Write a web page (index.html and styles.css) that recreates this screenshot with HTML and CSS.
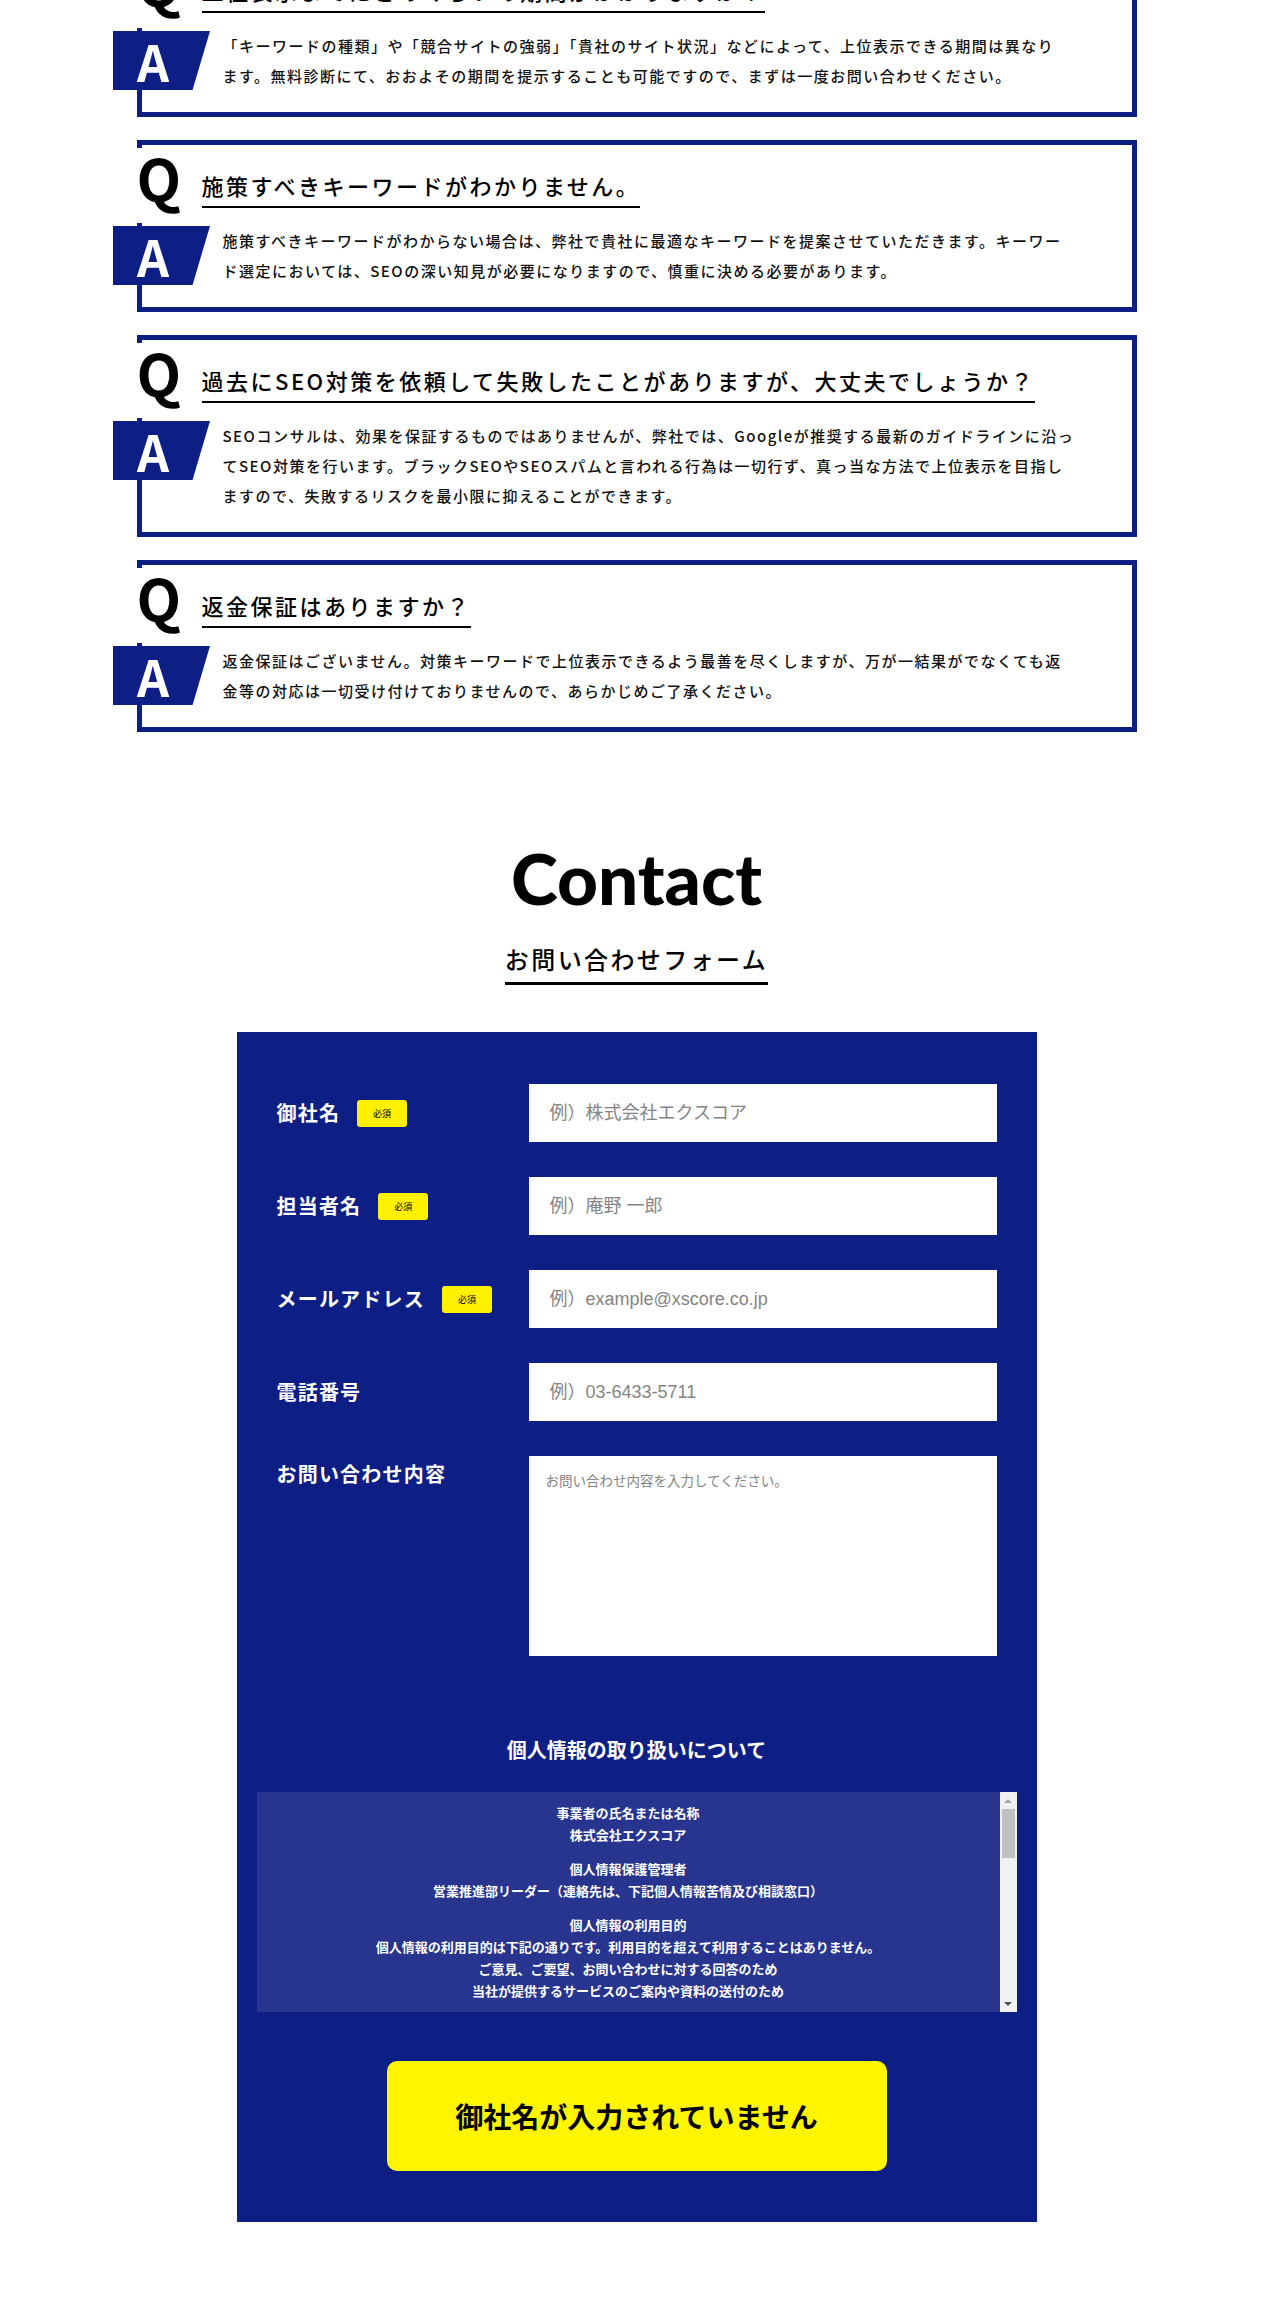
FILE: index.html
```html
<!DOCTYPE html>
<html lang="ja">
<head>
<meta charset="utf-8">
<title>FAQ / Contact</title>
<link rel="stylesheet" href="styles.css">
</head>
<body>
<section class="faq">
  <div class="faq-item">
    <span class="faq-q-mark">Q</span>
    <h3 class="faq-question">上位表示までにどのくらいの期間がかかりますか？</h3>
    <span class="faq-a-mark">A</span>
    <p class="faq-answer">「キーワードの種類」や「競合サイトの強弱」「貴社のサイト状況」などによって、上位表示できる期間は異なり<br>ます。無料診断にて、おおよその期間を提示することも可能ですので、まずは一度お問い合わせください。</p>
  </div>
  <div class="faq-item">
    <span class="faq-q-mark">Q</span>
    <h3 class="faq-question">施策すべきキーワードがわかりません。</h3>
    <span class="faq-a-mark">A</span>
    <p class="faq-answer">施策すべきキーワードがわからない場合は、弊社で貴社に最適なキーワードを提案させていただきます。キーワー<br>ド選定においては、SEOの深い知見が必要になりますので、慎重に決める必要があります。</p>
  </div>
  <div class="faq-item">
    <span class="faq-q-mark">Q</span>
    <h3 class="faq-question">過去にSEO対策を依頼して失敗したことがありますが、大丈夫でしょうか？</h3>
    <span class="faq-a-mark">A</span>
    <p class="faq-answer">SEOコンサルは、効果を保証するものではありませんが、弊社では、Googleが推奨する最新のガイドラインに沿っ<br>てSEO対策を行います。ブラックSEOやSEOスパムと言われる行為は一切行ず、真っ当な方法で上位表示を目指し<br>ますので、失敗するリスクを最小限に抑えることができます。</p>
  </div>
  <div class="faq-item">
    <span class="faq-q-mark">Q</span>
    <h3 class="faq-question">返金保証はありますか？</h3>
    <span class="faq-a-mark">A</span>
    <p class="faq-answer">返金保証はございません。対策キーワードで上位表示できるよう最善を尽くしますが、万が一結果がでなくても返<br>金等の対応は一切受け付けておりませんので、あらかじめご了承ください。</p>
  </div>
</section>

<section class="contact">
  <h2 class="contact-title">Contact</h2>
  <div class="contact-sub"><span>お問い合わせフォーム</span></div>

  <form class="contact-form">
    <div class="form-row">
      <label class="form-label">御社名<span class="req">必須</span></label>
      <input class="form-input" type="text" placeholder="例）株式会社エクスコア">
    </div>
    <div class="form-row">
      <label class="form-label">担当者名<span class="req">必須</span></label>
      <input class="form-input" type="text" placeholder="例）庵野 一郎">
    </div>
    <div class="form-row">
      <label class="form-label">メールアドレス<span class="req">必須</span></label>
      <input class="form-input" type="email" placeholder="例）example@xscore.co.jp">
    </div>
    <div class="form-row">
      <label class="form-label">電話番号</label>
      <input class="form-input" type="tel" placeholder="例）03-6433-5711">
    </div>
    <div class="form-row is-textarea">
      <label class="form-label">お問い合わせ内容</label>
      <textarea class="form-textarea" placeholder="お問い合わせ内容を入力してください。"></textarea>
    </div>

    <h3 class="privacy-title">個人情報の取り扱いについて</h3>
    <div class="privacy-wrap">
      <div class="privacy-box">
        <p>事業者の氏名または名称<br>株式会社エクスコア</p>
        <p>個人情報保護管理者<br>営業推進部リーダー（連絡先は、下記個人情報苦情及び相談窓口）</p>
        <p>個人情報の利用目的<br>個人情報の利用目的は下記の通りです。利用目的を超えて利用することはありません。<br>ご意見、ご要望、お問い合わせに対する回答のため<br>当社が提供するサービスのご案内や資料の送付のため</p>
      </div>
      <div class="scrollbar" aria-hidden="true">
        <span class="scroll-btn scroll-up"></span>
        <span class="scroll-track"><span class="scroll-thumb"></span></span>
        <span class="scroll-btn scroll-down"></span>
      </div>
    </div>

    <button class="submit" type="button">御社名が入力されていません</button>
  </form>
</section>
</body>
</html>
```

FILE: styles.css
```css
* {
  box-sizing: border-box;
}

body {
  margin: 0;
  background: #ffffff;
  font-family: "Noto Sans CJK JP", "Noto Sans", sans-serif;
  color: #111111;
}

/* FAQ */
.faq {
  width: 1000px;
  margin: -55px auto 0;
}

.faq-item {
  position: relative;
  display: flex;
  flex-direction: column;
  align-items: flex-start;
  border: 5px solid #0d1e84;
  padding: 24px 20px 21px 60px;
  margin-bottom: 23px;
  background: #ffffff;
}

.faq-item:last-child {
  margin-bottom: 0;
}

.faq-q-mark {
  position: absolute;
  left: -5px;
  top: 3px;
  width: 40px;
  height: 75px;
  background: #ffffff;
  color: #000000;
  font-size: 58px;
  line-height: 58px;
  font-weight: 700;
}

.faq-question {
  margin: 0;
  font-size: 22px;
  line-height: 32px;
  font-weight: 500;
  letter-spacing: 2.5px;
  color: #000000;
  padding-bottom: 5px;
  border-bottom: 2px solid #000000;
}

.faq-a-mark {
  position: absolute;
  left: -28.5px;
  top: 81px;
  width: 97px;
  height: 59px;
  padding-left: 24px;
  background: #0d1e84;
  color: #ffffff;
  clip-path: polygon(0 0, 100% 0, 82% 100%, 0 100%);
  font-size: 50px;
  line-height: 59px;
  font-weight: 700;
}

.faq-answer {
  margin: 18px 0 0 21px;
  width: 890px;
  white-space: nowrap;
  font-size: 15px;
  line-height: 30px;
  letter-spacing: 1.5px;
  font-weight: 500;
  color: #111111;
}

/* Contact */
.contact {
  padding: 111px 0 50px;
  text-align: center;
}

.contact-title {
  margin: 0;
  font-family: "Lato", sans-serif;
  font-weight: 900;
  font-size: 71px;
  line-height: 70px;
  color: #000000;
}

.contact-sub {
  display: flex;
  justify-content: center;
  margin-top: 28px;
}

.contact-sub span {
  font-size: 24px;
  line-height: 36px;
  letter-spacing: 2.4px;
  font-weight: 500;
  color: #000000;
  padding-bottom: 5px;
  border-bottom: 3px solid #000000;
}

.contact-form {
  width: 800px;
  margin: 47px auto 0;
  padding: 52px 40px 51px;
  background: #0d1e84;
  text-align: left;
}

.form-row {
  display: grid;
  grid-template-columns: 252px 1fr;
  align-items: center;
  margin-bottom: 35px;
}

.form-row.is-textarea {
  align-items: start;
  margin-bottom: 0;
}

.form-label {
  display: flex;
  align-items: center;
  color: #ffffff;
  font-size: 20px;
  line-height: 36px;
  font-weight: 700;
  letter-spacing: 1.2px;
}

.req {
  display: inline-flex;
  align-items: center;
  justify-content: center;
  width: 50px;
  height: 27px;
  margin-left: 17px;
  background: #fff100;
  color: #000000;
  border-radius: 3px;
  font-size: 9px;
  line-height: 1;
  font-weight: 400;
  letter-spacing: 0;
}

.form-input {
  display: block;
  width: 100%;
  height: 58px;
  border: 0;
  padding: 0 21px;
  background: #ffffff;
  font-family: "Liberation Sans", "Noto Sans CJK JP", sans-serif;
  font-size: 18px;
  color: #333333;
}

.form-input::placeholder,
.form-textarea::placeholder {
  color: #848484;
}

.form-textarea {
  display: block;
  width: 100%;
  height: 200px;
  border: 0;
  padding: 14px 17px;
  resize: none;
  background: #ffffff;
  font-family: "Liberation Sans", "Noto Sans CJK JP", sans-serif;
  font-size: 13.5px;
  color: #333333;
}

.privacy-title {
  margin: 79px 0 0;
  text-align: center;
  color: #ffffff;
  font-size: 20px;
  line-height: 30px;
  font-weight: 700;
}

.privacy-wrap {
  position: relative;
  margin: 27px -20px 0;
  height: 220px;
  background: #27358f;
}

.privacy-box {
  height: 100%;
  overflow: hidden;
  padding: 10px 37px 10px 20px;
  color: #ffffff;
  text-align: center;
  font-size: 13px;
  line-height: 22px;
  font-weight: 700;
}

.privacy-box p {
  margin: 0 0 12px;
}

.scrollbar {
  position: absolute;
  top: 0;
  right: 0;
  bottom: 0;
  width: 17px;
  display: flex;
  flex-direction: column;
  background: #f1f1f1;
}

.scroll-btn {
  flex: 0 0 17px;
  display: flex;
  align-items: center;
  justify-content: center;
}

.scroll-up::before {
  content: "";
  border-left: 4px solid transparent;
  border-right: 4px solid transparent;
  border-bottom: 4px solid #a3a3a3;
}

.scroll-down::before {
  content: "";
  border-left: 4px solid transparent;
  border-right: 4px solid transparent;
  border-top: 4px solid #505050;
}

.scroll-track {
  flex: 1;
  padding: 0 2px;
}

.scroll-thumb {
  display: block;
  height: 49px;
  background: #c1c1c1;
}

.submit {
  display: block;
  width: 500px;
  height: 110px;
  margin: 49px auto 0;
  border: 0;
  border-radius: 10px;
  background: #fff500;
  color: #000000;
  font-family: "Noto Sans CJK JP", sans-serif;
  font-size: 28px;
  font-weight: 700;
}
```
